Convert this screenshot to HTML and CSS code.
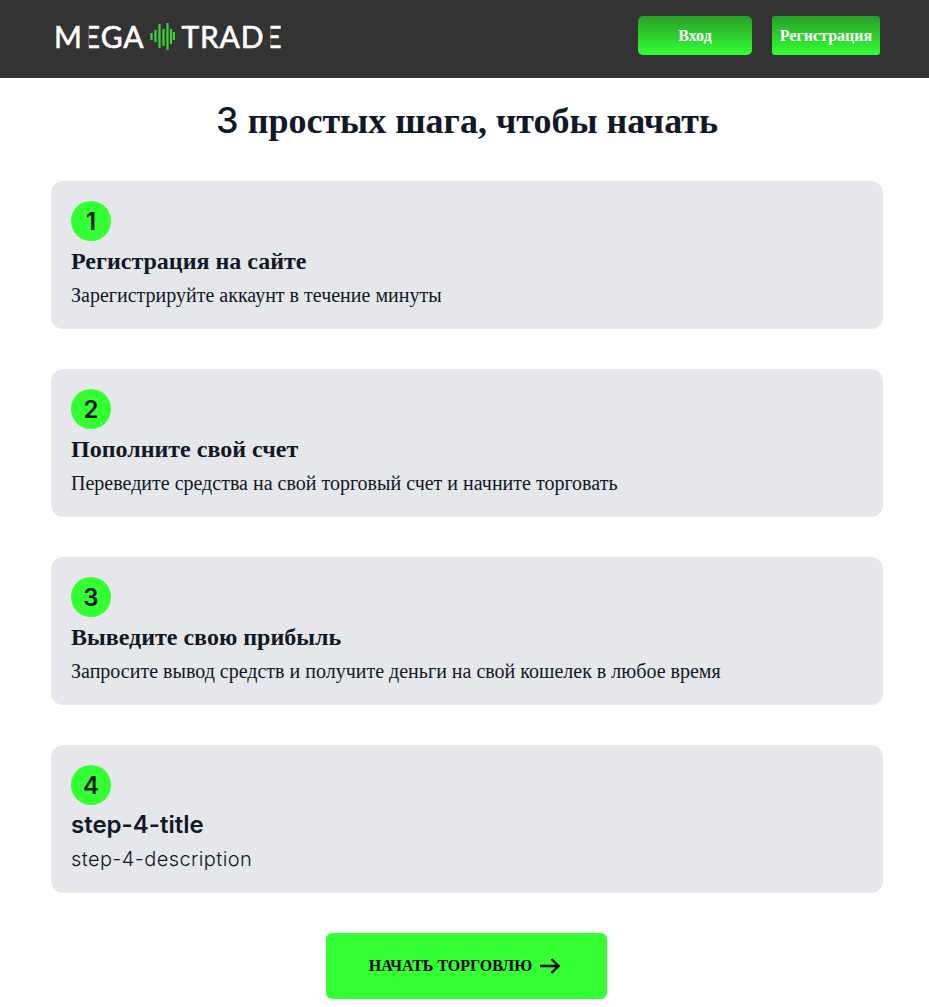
FILE: index.html
```html
<!DOCTYPE html>
<html lang="ru">
<head>
  <meta charset="UTF-8">
  <title>Mega Trade</title>
  <link rel="stylesheet" href="styles.css">
</head>
<body>
  <header class="topbar">
    <a class="logo" href="#">
      <span>M<span class="bar-e">E</span>GA</span>
      <svg class="logo-wave" width="25" height="28" viewBox="0 0 25 28" fill="none" stroke="#3bd43b" stroke-width="2.2">
        <path d="M1.5 11v7M5.5 8v12M9.5 2v24M13.5 7v17M17.5 1v27M21 7v15M24 10v8"/>
      </svg>
      <span>TRAD<span class="bar-e">E</span></span>
    </a>
    <nav class="auth">
      <a class="auth-btn login" href="#">Вход</a>
      <a class="auth-btn register" href="#">Регистрация</a>
    </nav>
  </header>

  <main>
    <h1 class="page-title"><span class="sans">3</span> простых шага, чтобы начать</h1>

    <section class="steps">
      <article class="step">
        <div class="step-num">1</div>
        <h2>Регистрация на сайте</h2>
        <p>Зарегистрируйте аккаунт в течение минуты</p>
      </article>
      <article class="step">
        <div class="step-num">2</div>
        <h2>Пополните свой счет</h2>
        <p>Переведите средства на свой торговый счет и начните торговать</p>
      </article>
      <article class="step">
        <div class="step-num">3</div>
        <h2>Выведите свою прибыль</h2>
        <p>Запросите вывод средств и получите деньги на свой кошелек в любое время</p>
      </article>
      <article class="step untranslated">
        <div class="step-num">4</div>
        <h2>step-4-title</h2>
        <p>step-4-description</p>
      </article>
    </section>

    <div class="cta-wrap">
      <a class="cta" href="#">
        Начать торговлю
        <svg width="20" height="16" viewBox="0 0 20 16" fill="none" stroke="#000" stroke-width="2.4">
          <path d="M0 8h18.5M11.5 1l7 7-7 7"/>
        </svg>
      </a>
    </div>
  </main>
</body>
</html>
```

FILE: styles.css
```css
body {
  font-family: "Liberation Serif", "Times New Roman", serif;
  background: #fff;
  color: #111827;
  margin: 0;
  padding: 0;
}
a {
  text-decoration: none;
}
.topbar {
  background: #333;
  height: 78px;
  box-sizing: border-box;
  padding: 16px 49px 0 54px;
  display: flex;
  justify-content: space-between;
  align-items: flex-start;
}
.logo {
  display: flex;
  align-items: center;
  gap: 6px;
  height: 40px;
  color: #fff;
  font-family: Lato, sans-serif;
  font-size: 30px;
  line-height: 40px;
  letter-spacing: 0.8px;
  -webkit-text-stroke: 0.6px #fff;
}
.bar-e {
  display: inline-block;
  clip-path: inset(0 0 0 34%);
}
.logo-wave {
  flex: none;
}
.auth {
  display: flex;
  gap: 20px;
}
.auth-btn {
  display: flex;
  align-items: center;
  justify-content: center;
  height: 39px;
  border-radius: 5px;
  background: linear-gradient(#289e28, #33ff33);
  color: #fff;
  font-size: 16px;
  font-weight: bold;
}
.login {
  width: 114px;
}
.register {
  width: 108px;
  border-radius: 3px;
}
main {
  padding: 0 46px 0 51px;
}
.page-title {
  margin: 0;
  padding-top: 20px;
  height: 83px;
  font-size: 36px;
  line-height: 45px;
  text-align: center;
}
.sans {
  font-family: Inter, sans-serif;
  font-weight: 500;
}
.steps {
  display: flex;
  flex-direction: column;
  gap: 40px;
}
.step {
  background: #e5e7eb;
  border-radius: 12px;
  height: 148px;
  box-sizing: border-box;
  padding: 20px;
}
.step-num {
  width: 40px;
  height: 40px;
  border-radius: 50%;
  background: #33ff33;
  display: flex;
  align-items: center;
  justify-content: center;
  font-family: Inter, sans-serif;
  font-size: 24px;
  font-weight: 600;
}
.step h2 {
  margin: 6px 0 0;
  font-size: 24px;
  line-height: 28px;
}
.step p {
  margin: 8px 0 0;
  font-size: 20px;
  line-height: 24px;
}
.untranslated h2,
.untranslated p {
  font-family: Inter, sans-serif;
}
.untranslated h2 {
  font-weight: 600;
}
.untranslated p {
  font-weight: 300;
  letter-spacing: 0.4px;
}
.cta-wrap {
  display: flex;
  justify-content: center;
  padding: 40px 1px 9px 0;
}
.cta {
  width: 281px;
  height: 66px;
  box-sizing: border-box;
  padding-right: 4px;
  border-radius: 6px;
  background: #33ff33;
  color: #000;
  display: flex;
  align-items: center;
  justify-content: center;
  gap: 8px;
  font-size: 16px;
  font-weight: bold;
  text-transform: uppercase;
}
```
